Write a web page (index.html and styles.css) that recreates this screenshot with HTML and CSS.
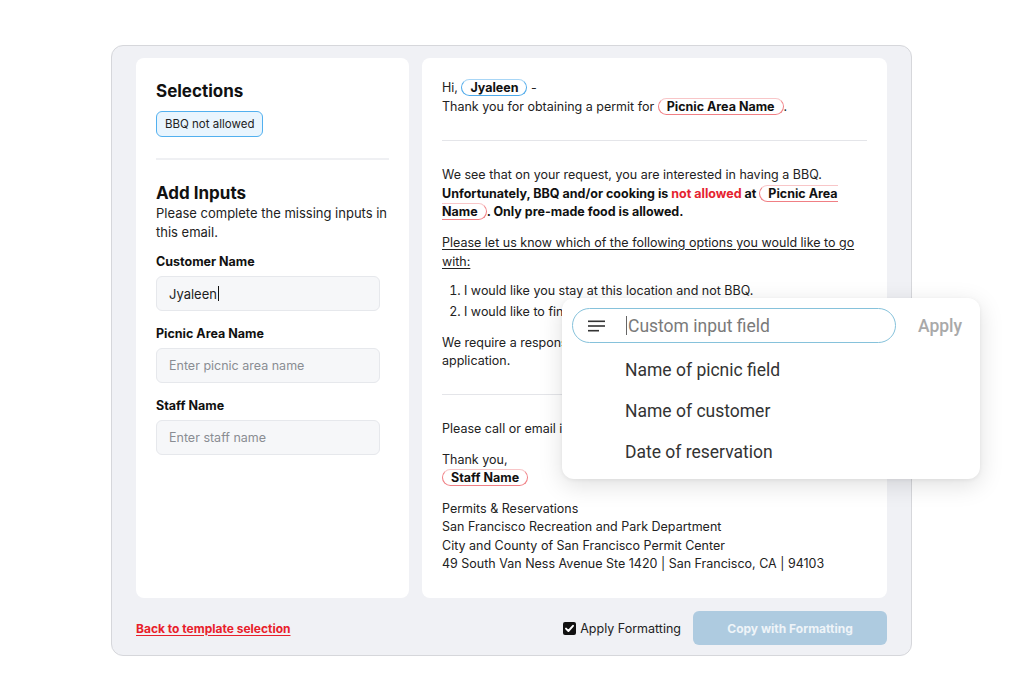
FILE: index.html
```html
<!DOCTYPE html>
<html>
<head>
<meta charset="utf-8">
<link rel="stylesheet" href="styles.css">
</head>
<body>
<div class="frame">
  <div class="cards">
    <aside class="side">
      <h2 class="side-title">Selections</h2>
      <div class="chips"><span class="chip">BBQ not allowed</span></div>
      <hr class="side-rule">
      <h2 class="side-title">Add Inputs</h2>
      <p class="side-desc">Please complete the missing inputs in this email.</p>
      <label class="field-label">Customer Name</label>
      <div class="field filled">Jyaleen<span class="caret"></span></div>
      <label class="field-label">Picnic Area Name</label>
      <div class="field">Enter picnic area name</div>
      <label class="field-label">Staff Name</label>
      <div class="field">Enter staff name</div>
    </aside>
    <section class="email">
      <p class="para">Hi, <span class="pill blue">Jyaleen</span> -<br>Thank you for obtaining a permit for <span class="pill red">Picnic Area Name</span>.</p>
      <hr class="email-rule">
      <p class="para">We see that on your request, you are interested in having a BBQ.<br><b>Unfortunately, BBQ and/or cooking is <span class="warn">not allowed</span> at <span class="pill red">Picnic Area<br>Name</span>. Only pre-made food is allowed.</b></p>
      <p class="para lead"><u>Please let us know which of the following options you would like to go with:</u></p>
      <ol class="options">
        <li>I would like you stay at this location and not BBQ.</li>
        <li>I would like to find a different location that allows BBQ.</li>
      </ol>
      <p class="para">We require a response within 48 hours or we will cancel your application.</p>
      <hr class="email-rule second">
      <p class="para">Please call or email if you have any questions.</p>
      <p class="para">Thank you,<br><span class="pill red">Staff Name</span></p>
      <p class="para sig">Permits &amp; Reservations<br>San Francisco Recreation and Park Department<br>City and County of San Francisco Permit Center<br>49 South Van Ness Avenue Ste 1420 | San Francisco, CA | 94103</p>
    </section>
  </div>
  <footer class="footer">
    <a class="back" href="#">Back to template selection</a>
    <div class="actions">
      <span class="check"><span class="box"><svg width="11" height="11" viewBox="0 0 11 11"><path d="M2 5.6 L4.4 8 L9 2.8" fill="none" stroke="#fff" stroke-width="1.9" stroke-linecap="round" stroke-linejoin="round"/></svg></span>Apply Formatting</span>
      <button class="copy">Copy with Formatting</button>
    </div>
  </footer>
  <div class="popup">
    <div class="popup-head">
      <div class="search">
        <svg class="search-icon" width="18" height="12" viewBox="0 0 18 12"><rect x="0" y="0.5" width="17" height="1.6" fill="#333"/><rect x="0" y="5.2" width="17" height="1.6" fill="#333"/><rect x="0" y="9.9" width="11" height="1.6" fill="#333"/></svg>
        <span class="search-caret"></span><span class="search-ph">Custom input field</span>
      </div>
      <span class="apply">Apply</span>
    </div>
    <ul class="popup-list">
      <li>Name of picnic field</li>
      <li>Name of customer</li>
      <li>Date of reservation</li>
    </ul>
  </div>
</div>
</body>
</html>
```
FILE: styles.css
```css
* { box-sizing: border-box; }
html, body { margin: 0; padding: 0; background: #fff; }
body {
  font-family: Inter, "Liberation Sans", sans-serif;
  color: #1f1f1f;
  padding: 45px 0 0 111px;
}
.frame {
  position: relative;
  width: 801px;
  height: 611px;
  background: #f0f1f5;
  border: 1px solid #d6d7db;
  border-radius: 12px;
  padding: 12px 24px 0 24px;
  display: flex;
  flex-direction: column;
}
.cards { display: flex; gap: 13px; height: 540px; }
.side {
  width: 273px;
  background: #fff;
  border-radius: 8px;
  padding: 22px 20px;
  display: flex;
  flex-direction: column;
  align-items: flex-start;
}
.side-title { margin: 0; font-size: 17px; line-height: 22px; font-weight: 700; color: #111; }
.chips { margin-top: 9px; }
.chip {
  display: inline-block;
  font-size: 11.5px;
  line-height: 24px;
  padding: 0 8px;
  background: #e9f5fe;
  border: 1px solid #52b0ef;
  border-radius: 6px;
  color: #222;
}
.side-rule { width: 100%; border: 0; border-top: 2px solid #eff0f3; margin: 21px 0 22px; }
.side-desc { margin: 0; font-size: 13px; line-height: 19px; color: #222; }
.field-label { display: block; margin-top: 12px; font-size: 12.5px; line-height: 16px; font-weight: 700; color: #111; }
.field-label + .field { margin-top: 6px; }
.field {
  width: 224px;
  height: 35px;
  background: #f6f7f9;
  border: 1px solid #e6e8ec;
  border-radius: 6px;
  padding: 0 12px;
  display: flex;
  align-items: center;
  font-size: 12.5px;
  color: #8a8d93;
}
.field + .field-label { margin-top: 15px; }
.field.filled { color: #1d1d1d; font-size: 13px; }
.caret { display: inline-block; width: 1px; height: 15px; background: #111; margin-left: 1px; }
.email {
  width: 465px;
  background: #fff;
  border-radius: 8px;
  padding: 21px 20px;
  font-size: 12.5px;
  line-height: 18.5px;
  color: #222;
}
.para { margin: 0 0 12.5px; }
.para.lead { margin-bottom: 10.5px; }
.email-rule { border: 0; border-top: 1px solid #e4e5e9; margin: 24px 0 25px; }
.email-rule.second { margin-top: 23px; }
.warn { color: #e52330; }
b { font-weight: 700; color: #111; }
u { text-underline-offset: 2px; }
.pill {
  font-weight: 700;
  color: #111;
  padding: 0 8px;
  border: 1.5px solid;
  border-radius: 9px;
  line-height: 16px;
}
.pill.blue { border-color: #a8d6f6 #4eaaea #4eaaea #4eaaea; }
.pill.red { border-color: #f8c6c8 #f07f84 #f07f84 #f07f84; }
.options { margin: 0 0 12.5px; padding-left: 22px; }
.options li { margin-bottom: 2.5px; padding-left: 0; }
.sig { margin-top: 11px; line-height: 18.3px; }
.footer {
  flex: 1;
  display: flex;
  align-items: center;
  justify-content: space-between;
  padding-top: 3px;
}
.back { color: #e8202a; font-weight: 700; font-size: 12px; text-decoration: underline; text-underline-offset: 2px; }
.actions { display: flex; align-items: center; gap: 12px; }
.check { display: flex; align-items: center; gap: 4px; font-size: 12.5px; color: #222; }
.box { width: 13px; height: 13px; background: #111; border-radius: 2px; display: flex; align-items: center; justify-content: center; }
.copy {
  width: 194px;
  height: 34px;
  border: 0;
  border-radius: 6px;
  background: #aecbe0;
  color: #eef4f8;
  font-family: Inter, "Liberation Sans", sans-serif;
  font-size: 12px;
  font-weight: 700;
}
.popup {
  position: absolute;
  left: 450px;
  top: 252px;
  width: 418px;
  height: 181px;
  background: #fff;
  border-radius: 12px;
  box-shadow: 0 6px 24px rgba(0,0,0,0.13), 0 1px 4px rgba(0,0,0,0.06);
  padding: 10px 10px;
  font-family: Roboto, Inter, sans-serif;
}
.popup-head { display: flex; align-items: center; gap: 22px; }
.search {
  width: 324px;
  height: 35px;
  border: 1.4px solid #86c2db;
  border-radius: 18px;
  display: flex;
  align-items: center;
  padding-left: 15px;
}
.search-icon { flex: none; }
.search-caret { width: 1px; height: 19px; background: #666; margin-left: 20px; }
.search-ph { font-size: 17.5px; color: #7a7a7a; margin-left: 1px; }
.apply { font-size: 17.5px; color: #a9a9a9; font-weight: 500; }
.popup-list { list-style: none; margin: 7px 0 0; padding: 0 0 0 53px; }
.popup-list li { font-size: 17.5px; line-height: 41px; color: #333; }
```
